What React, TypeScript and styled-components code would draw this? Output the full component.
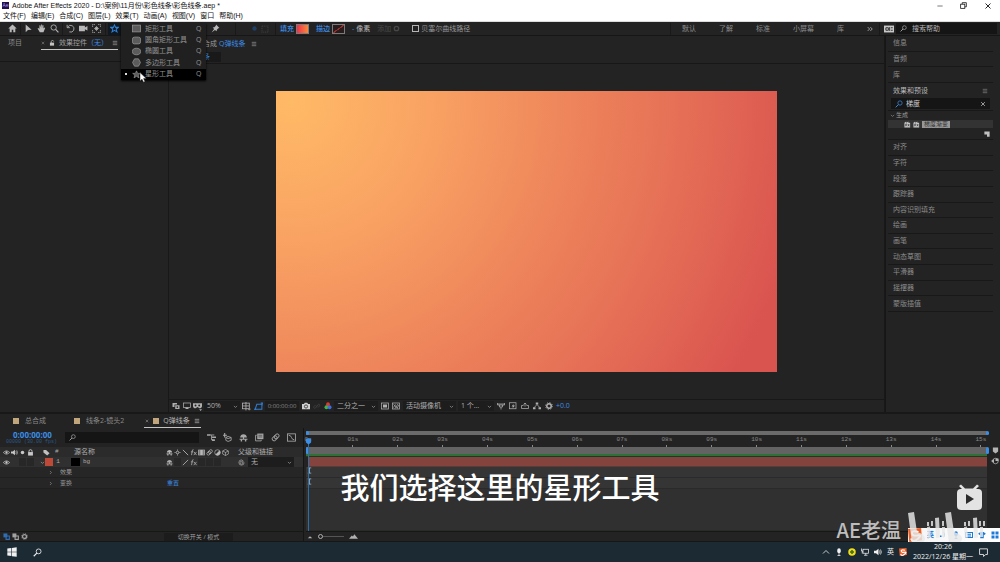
import React from "react";
import styled, { createGlobalStyle, css } from "styled-components";

const GlobalStyle = createGlobalStyle`
  * { box-sizing: border-box; }
  html, body { margin: 0; background: #1a1a1a; }
  body, button, input, select {
    font-family: "Open Sans", "Noto Sans CJK SC", sans-serif;
    font-size: 7px;
    line-height: 10px;
  }
  button, input, select { margin: 0; padding: 0; border: 0; background: none; color: inherit; }
  a { color: inherit; text-decoration: none; }
`;

/* ---------- icons ---------- */

const S = { fill: "none", stroke: "currentColor", strokeWidth: 1.5 } as const;
const F = { fill: "currentColor" } as const;
const starPath = "M8 1.5 10 6h4.8l-3.8 3 1.4 5L8 11.2 3.6 14 5 9 1.2 6H6z";

const glyphs: Record<string, React.ReactNode> = {
  home: <path {...F} d="M8 1 0.5 8H3v6.5h3.6V10h2.8v4.5H13V8h2.5z" />,
  cursor: <path {...F} d="M3 1v13.5l4-3.8 6.5-.6z" />,
  hand: <path {...F} d="M4.2 9 2.6 7 1 8l4 6.5h6.5L14.5 7l-1.3-1-1.7 2.2V2.4h-1.7V7L9 1H7.4v6L6 2H4.4z" />,
  zoom: <g {...S}><circle cx="6.5" cy="6.2" r="4.7" /><path d="m10 9.6 5 5.2" strokeWidth="2" /></g>,
  rotate: <g {...S}><path d="M3 5.5A6 6 0 1 1 6 14" /><path d="M2 1.5v5h5" /></g>,
  camera: <path {...F} d="M0 3h10.5v3.4L15 3.6v8l-4.5-2.4V13H0z" />,
  anchor: <g {...S}><path d="M1 5V1h4M11 1h4v4M15 11v4h-4M5 15H1v-4" strokeDasharray="2 1" /><path d="M8 4v8M4 8h8M5.5 5.5l5 5M10.5 5.5l-5 5" /></g>,
  starLine: <path {...S} strokeWidth="1.8" d={starPath} />,
  pin: <path {...F} d="m9 1 6 6-2 .5-2.6 2.6L10 13 7 10.5 1 15l4.5-6L3 6l3-.4L8.5 3z" />,
  dotCircle: <circle {...F} cx="8" cy="8" r="5" />,
  dotted: <rect {...S} x="2" y="2" width="12" height="12" strokeDasharray="2 1.5" strokeWidth="2.5" />,
  ring: <circle {...S} cx="8" cy="8" r="5" strokeWidth="3" />,
  rect: <rect x="0.8" y="2" width="14.4" height="12" fill="#5c5c5c" stroke="currentColor" strokeWidth="1.4" />,
  rounded: <rect x="0.8" y="2" width="14.4" height="12" rx="3.5" fill="#5c5c5c" stroke="currentColor" strokeWidth="1.4" />,
  ellipse: <ellipse cx="8" cy="8" rx="7.3" ry="5.8" fill="#5c5c5c" stroke="currentColor" strokeWidth="1.4" />,
  polygon: <path fill="#5c5c5c" stroke="currentColor" strokeWidth="1.4" d="M4.5 1.5h7L15 8l-3.5 6.5h-7L1 8z" />,
  starFill: <path fill="#5c5c5c" stroke="currentColor" strokeWidth="1.2" d={starPath} />,
  menu: <path {...S} d="M2 3.5h12M2 8h12M2 12.5h12" strokeWidth="1.8" />,
  lock: <g><path {...S} strokeWidth="2" d="M4.5 8V5a3.5 3.5 0 0 1 7 0v3" /><rect {...F} x="2.5" y="7" width="11" height="8" /></g>,
  unlock: <g><path {...S} strokeWidth="2" d="M6 8V4a3.3 3.3 0 0 1 6.5 0" /><rect {...F} x="2.5" y="7" width="11" height="8" /></g>,
  close: <path {...S} d="m3 3 10 10M13 3 3 13" strokeWidth="1.8" />,
  minimize: <path {...S} d="M1 8h14" />,
  restore: <g {...S} strokeWidth="1.8"><rect x="1.5" y="5" width="9.5" height="9.5" /><path d="M5 5V1.5h9.5V11H11" /></g>,
  more: <path {...S} strokeWidth="2" d="m2 3 5 5-5 5M9 3l5 5-5 5" />,
  panelSwitch: <g><rect {...F} x="0" y="2.5" width="16" height="11" /><path d="M3 6h4v4H3zM9 5v6M11 6h3M11 10h3" stroke="#222" strokeWidth="1.4" fill="none" /></g>,
  search: <g {...S}><circle cx="10" cy="6" r="4.3" /><path d="m6.8 9.2-5.5 5.5" strokeWidth="2" /></g>,
  chevronDown: <path {...S} strokeWidth="2" d="m3 6 5 5 5-5" />,
  chevronRight: <path {...S} strokeWidth="2" d="m6 3 5 5-5 5" />,
  fxPreset: <g><path {...F} d="M1 4 5 1v3l5-3v3h4v11H1z" /><path d="M4 12V7h3M4 9.5h3M9 7l3 5M12 7l-3 5" stroke="#222" strokeWidth="1.3" fill="none" /></g>,
  newItem: <path {...F} d="M1 1h14v14H8V9H1z" />,
  layers: <g><path {...F} d="M1 2h9v3H5v5H1z" /><path {...F} d="M6.5 6.5H15V14H6.5z" /><circle cx="10.7" cy="10.2" r="1.8" fill="#222" /></g>,
  monitor: <g><rect {...S} x="1" y="2" width="14" height="9" /><path {...F} d="M5 14h6v-3H5z" /></g>,
  mask: <g><path {...F} d="M0 2h16v5c0 3-2 4-4.5 4L8 9l-3.5 2C2 11 0 10 0 7z" /><circle cx="4.5" cy="6.3" r="1.7" fill="#222" /><circle cx="11" cy="6.3" r="1.7" fill="#222" /><path {...F} d="M11 13h5l-2.5 3z" /></g>,
  grid: <g {...S}><rect x="1" y="2" width="12" height="10" /><path d="M7 0v15M1 7h12M11 12l2 2.5 2-2.5" /></g>,
  path: <g {...S} strokeWidth="1.8"><path d="M2 13 5 4h9v9z" /><path d="M0 13h4M12 2h4v4" /></g>,
  photo: <g><path {...F} d="M0 4h4l1.5-2.5h5L12 4h4v10.5H0z" /><circle cx="8" cy="9" r="3.2" fill="none" stroke="#222" strokeWidth="1.5" /></g>,
  chain: <path {...S} strokeWidth="2" d="m6 10 4-5c2-2 5 1 3 3l-3 3M10 6 5 12c-2 2-5-1-3-3l3-3" />,
  rgb: <g><circle cx="8" cy="4.5" r="3.8" fill="#e2382c" /><circle cx="4.8" cy="10.5" r="3.8" fill="#41b34d" /><circle cx="11.2" cy="10.5" r="3.8" fill="#3c6fe0" /></g>,
  roi: <g><rect {...S} x="0.8" y="2" width="14.4" height="12" /><rect {...F} x="4" y="5" width="8" height="6" /></g>,
  transparent: <g><rect {...S} x="0.8" y="2" width="14.4" height="12" /><path {...S} d="m3 11 4-6M6 13l6-9M10 12l4-6M3 5l9 8" /></g>,
  align: <g {...S}><path d="M1 2v4h14V2M1 4h14M5 6v4h6V6M8 10v5" /></g>,
  fastPreview: <g><rect {...S} x="1" y="1.5" width="13" height="12" /><path {...F} d="M9 4 5 9h3l-1 4 5-6H9z" /></g>,
  timelineBtn: <g {...S}><path d="M1 7v6h14V7h-4M5 7H1M8 2v7M5 5l3-3 3 3" /></g>,
  flow: <g {...F}><path d="M5.5 1h5v4h-5zM0 10.5h5v4H0zM11 10.5h5v4h-5z" /><path {...S} d="M2.5 11 8 5l5.5 6" /></g>,
  gear: <g><circle {...S} cx="8" cy="8" r="4.5" strokeWidth="3" /><circle {...S} cx="8" cy="8" r="7" strokeDasharray="2.5 3" /></g>,
  eye: <g><path {...S} d="M0.8 8q7.2-7.5 14.4 0-7.2 7.5-14.4 0z" /><circle {...F} cx="8" cy="8" r="2.6" /></g>,
  audio: <g><path {...F} d="M0 5.5h4L9 1.5v13L4 10.5H0z" /><path {...S} d="M11 5q2 3 0 6M13 3q3.500 5 0 10" /></g>,
  dot: <circle {...F} cx="8" cy="8" r="4" />,
  tag: <path {...F} d="M1 2h6l8 7.5L9.500 15 1 8z" />,
  shy: <g><path {...F} d="M2 8C2 0 14 0 14 8H9v2h6v2H1v-2h6V8z" /><path {...F} d="M3 11h2.500v4H3zM10.500 11H13v4h-2.500z" /></g>,
  sun: <g {...S}><circle cx="8" cy="8" r="3" strokeWidth="2" /><path d="M8 1v3M8 12v3M1 8h3M12 8h3" /></g>,
  backslash: <path {...S} strokeWidth="2" d="m2 2 12 12" />,
  slash: <path {...S} strokeWidth="2" d="M2 14 14 2" />,
  fx: <path {...S} strokeWidth="1.8" d="M8 1.5Q5 1 5 5L3.500 14M2 6.500h5.500M9 6.500l6 7.500M15 6.500 8.500 14" />,
  film: <g><rect {...F} x="0.5" y="1.5" width="15" height="13" /><path stroke="#2a2a2a" strokeWidth="1.3" d="M4 2v12M12 2v12" /></g>,
  blur: <g {...S} strokeWidth="1.6"><ellipse cx="10" cy="6" rx="5" ry="3.6" transform="rotate(-45 10 6)" /><ellipse cx="6.5" cy="9.5" rx="5" ry="3.6" transform="rotate(-45 6.5 9.5)" /></g>,
  adjust: <g><circle {...S} cx="8" cy="8" r="6.3" /><path {...F} d="M12.500 3.500A6.300 6.300 0 0 1 3.500 12.500z" /></g>,
  cube: <path {...S} d="M8 1 14.500 4.500v7L8 15l-6.500-3.500v-7zM1.500 4.500 8 8l6.500-3.500M8 8v7" />,
  spiral: <path {...S} d="M14 8A6 6 0 1 1 8 2q5 1 3.500 6a3.500 3.500 0 1 1-4-3q3 0 2 4" />,
  comp: <g><path {...F} d="M0 2h6v3H0zM9 6h7v3H9zM9 11h5v3H9z" /><path {...S} d="M5 3.500h8M8 4v8h3" /></g>,
  draft: <g><path {...S} d="M9 6l5.500 2v5L9 15l-4-2V8zM5 8l4 2 5.500-2" /><path {...F} d="M4 0v3h3v2H4v3H2V5H0V3h2V0z" /></g>,
  frames: <g><path {...F} d="M4 1h11v10H4z" /><path {...S} d="M3 4H1v10h10v-2" /><path stroke="#222" d="M6 4h7M6 7h7" /></g>,
  graph: <g {...S}><rect x="1" y="1.5" width="14" height="13" /><path d="M3 4q4 0 5 4t5 4" /></g>,
  mountain: <path {...F} d="m0 12 5-6 2 2 2.500-4L16 12z" />,
  hill: <path {...F} d="m2 11 6-5 6 5z" />,
  marker: <path {...F} d="M2 1h12v9l-6 5-6-5z" />,
  bin: <g><circle {...S} cx="9" cy="8" r="5.5" /><path {...F} d="M0 8l6-4v8zM9 3h6v5H9z" /></g>,
  ibeam: <path {...S} strokeWidth="1.8" d="M4 2h8M4 14h8M8 2v12" />,
  toggle: <g><path {...F} d="M1 1h9v9H1z" /><path {...S} strokeWidth="2.5" d="M7 7h7.500v7.500H7z" /></g>,
  windows: <path {...F} d="M0.500 2.500 7 1.600v6H0.500zM8 1.500 15.500 0.500v7.100H8zM0.500 8.500H7v6L0.500 13.500zM8 8.500h7.500v7.100L8 14.600z" />,
  caretUp: <path {...S} strokeWidth="1.6" d="m2 11 6-6 6 6" />,
  mic: <g><rect {...F} x="4.5" y="0.5" width="7" height="10" rx="3.5" /><path {...S} d="M8 10v5.500M5 15h6" /></g>,
  guard: <g><circle cx="8" cy="8" r="7.5" fill="#f0dc1e" /><path d="M8 4v8M4 8h8" stroke="#3c6e14" strokeWidth="3" /></g>,
  network: <g {...S}><rect x="4" y="2.5" width="11" height="8" /><path d="M9.500 10.500v4M6 14.500h7M1 1v5h3M2.500 6v5" /></g>,
  note: <path {...S} d="M1 1.500h14v10h-3l-4 3.500v-3.500H1z" />,
  sogou: <g><path fill="#ec5f26" d="M0 1 15 0l1 14-14.500 2z" /><path d="M12 4.500Q4 2.500 4.500 6t6.500 2.500 0 4-7.500-.5" fill="none" stroke="#fff" strokeWidth="2.2" /></g>,
  moon: <path {...F} d="M9 2c4 3 4 8 0 11 2-4 2-7 0-11zM2 9h3v3H2z" />,
  keyboard: <g {...S} strokeWidth="2"><rect x="1" y="3" width="14" height="10" /><path d="M4 6.500h8M4 10h8" /></g>,
  shirt: <path {...F} d="M5 2h6l4.500 3-2 3-2-1v7.500h-7V7l-2 1-2-3z" />,
  apps: <path {...F} d="M1 1h6v6H1zM9 1h6v6H9zM1 9h6v6H1zM9 9h6v6H9z" />,
};

const Svg = styled.svg<{ $s: number; $c?: string }>`
  display: block;
  flex: none;
  width: ${(p) => p.$s}px;
  height: ${(p) => p.$s}px;
  color: ${(p) => p.$c ?? "inherit"};
`;

const Icon = ({ n, s = 9, c }: { n: string; s?: number; c?: string }) => (
  <Svg $s={s} $c={c} viewBox="0 0 16 16" aria-hidden="true">{glyphs[n]}</Svg>
);

/* ---------- window frame ---------- */

const Window = styled.div`
  position: relative;
  display: flex;
  flex-direction: column;
  min-height: 100vh;
  overflow: hidden;
  background: #181818;
  color: #a2a2a2;
`;

const TitleBar = styled.header`
  display: flex;
  align-items: center;
  height: 11px;
  padding: 0 8px 0 2px;
  gap: 3px;
  background: #fff;
  color: #111;
`;
const AppBadge = styled.span`
  width: 7px;
  height: 7px;
  background: #22104f;
  color: #b9a4f5;
  font-size: 5px;
  line-height: 7px;
  text-align: center;
`;
const Title = styled.h1`
  flex: 1;
  margin: 0;
  font-family: "Liberation Sans", "Noto Sans CJK SC", sans-serif;
  font-size: 7px;
  font-weight: 400;
  line-height: 11px;
  white-space: nowrap;
`;
const WindowButtons = styled.div`
  display: flex;
  gap: 17px;
`;

const MenuBar = styled.nav`
  display: flex;
  align-items: center;
  height: 11px;
  padding-left: 3px;
  gap: 5px;
  background: #fff;
  color: #111;
  border-bottom: 1px solid #dcdcdc;
  white-space: nowrap;
`;
const MenuButton = styled.button`
  font-family: "Liberation Sans", "Noto Sans CJK SC", sans-serif;
`;

const IconButton = styled.button<{ $w?: number; $on?: boolean }>`
  display: flex;
  flex: none;
  align-items: center;
  justify-content: center;
  width: ${(p) => (p.$w ? `${p.$w}px` : "auto")};
  height: ${(p) => (p.$on ? "12px" : "auto")};
  background: ${(p) => (p.$on ? "#101820" : "none")};
`;

/* ---------- tool bar ---------- */

const ToolBar = styled.div`
  display: flex;
  align-items: center;
  height: 14px;
  padding: 0 3px 0 6px;
  background: #232323;
  border-bottom: 1px solid #161616;
  color: #b9b9b9;
  white-space: nowrap;
`;
const Divider = styled.span<{ $m?: number }>`
  flex: none;
  width: 1px;
  height: 12px;
  margin: 0 ${(p) => p.$m ?? 1}px;
  background: #191919;
`;
const HiddenTools = styled.span`
  flex: none;
  width: 88px;
`;
const BlueButton = styled.button`
  color: #3d8ce4;
  font-weight: 500;
`;
const Swatch = styled.button<{ $fill: string }>`
  width: 13px;
  height: 10px;
  background: ${(p) => p.$fill};
  border: 1px solid #7b7b7b;
`;
const ToolOptions = styled.div`
  display: flex;
  flex: 1;
  align-items: center;
  gap: 2px;
`;
const PairGap = styled.span`
  width: 3px;
`;
const Dim = styled.button`
  display: flex;
  align-items: center;
  gap: 2px;
  color: #484848;
`;
const CheckLabel = styled.label`
  display: flex;
  align-items: center;
  gap: 2px;
  padding-left: 10px;
  color: #999;
`;
const CheckBox = styled.input`
  appearance: none;
  width: 7px;
  height: 7px;
  border: 1px solid #b5b5b5;
`;
const Workspaces = styled.nav`
  display: flex;
  align-items: center;
  gap: 23px;
  padding-right: 5px;
  color: #8c8c8c;
`;

const SearchBox = styled.label<{ $w?: number }>`
  display: flex;
  align-items: center;
  width: ${(p) => (p.$w ? `${p.$w}px` : "auto")};
  height: 11px;
  padding: 0 4px;
  gap: 5px;
  background: #151515;
  color: #b0b0b0;
`;
const SearchInput = styled.input`
  flex: 1;
  min-width: 0;
  height: 10px;
  color: #d0d0d0;
  outline: none;
  &::placeholder { color: #b4b4b4; opacity: 1; }
`;

/* ---------- shape tool menu ---------- */

const ToolMenu = styled.div`
  position: absolute;
  z-index: 3;
  top: 23px;
  left: 121px;
  display: grid;
  grid-auto-rows: 1fr;
  width: 85px;
  height: 57px;
  background: #202020;
  box-shadow: 0 1px 2px #000;
`;
const ToolMenuItem = styled.button<{ $on?: boolean }>`
  display: grid;
  grid-template-columns: 11px 13px 1fr 6px;
  align-items: center;
  padding-right: 4px;
  background: ${(p) => (p.$on ? "#000" : "none")};
  color: #939393;
  text-align: left;
  white-space: nowrap;
`;
const Bullet = styled.span<{ $on?: boolean }>`
  width: 2px;
  height: 2px;
  margin-left: 4px;
  background: ${(p) => (p.$on ? "#ddd" : "none")};
`;
const Pointer = styled.svg`
  position: absolute;
  z-index: 4;
  top: 72px;
  left: 139px;
  width: 8px;
  height: 11px;
`;

/* ---------- upper panels ---------- */

const Upper = styled.main`
  display: grid;
  grid-template-columns: 168px 1fr 115px;
  flex: 1;
  gap: 1px;
  min-height: 376px;
`;
const Panel = styled.section`
  display: flex;
  flex-direction: column;
  min-width: 0;
  background: #232323;
`;
const TabRow = styled.div<{ $h: number }>`
  display: flex;
  align-items: flex-start;
  height: ${(p) => p.$h}px;
  padding-left: 8px;
  gap: 19px;
  border-bottom: 1px solid #171717;
  white-space: nowrap;
`;
const Tab = styled.button<{ $on?: boolean }>`
  display: flex;
  align-items: center;
  height: 14px;
  gap: 4px;
  color: ${(p) => (p.$on ? "#a0a0a0" : "#8a8a8a")};
  border-bottom: 1px solid ${(p) => (p.$on ? "#c4c4c4" : "transparent")};
`;
const Blue = styled.span`
  color: #3d8ce4;
`;
const CompHeader = styled.div`
  height: 28px;
  border-bottom: 1px solid #171717;
  white-space: nowrap;
`;
const CompTab = styled.button`
  display: flex;
  align-items: center;
  height: 15px;
  padding-left: 34px;
  gap: 2px;
  color: #9a9a9a;
`;
const Crumb = styled.a`
  display: block;
  width: 52px;
  height: 10px;
  margin-top: 1px;
  padding-right: 11px;
  background: #191919;
  color: #3d8ce4;
  line-height: 9px;
  text-align: right;
`;
const Viewer = styled.div`
  display: flex;
  flex: 1;
  align-items: center;
  justify-content: center;
`;
const Canvas = styled.div`
  width: 70%;
  aspect-ratio: 16 / 9;
  background: radial-gradient(circle farthest-corner at 3% 4%, #ffba66 0%, #f9a263 25%, #ee855b 50%, #e36a55 75%, #d9534f 94%);
`;
const ViewerBar = styled.div`
  display: flex;
  align-items: center;
  height: 13px;
  padding-left: 2px;
  gap: 2px;
  background: #232323;
  border-top: 1px solid #181818;
  color: #b0b0b0;
  white-space: nowrap;
`;
const SelectWrap = styled.label<{ $w: number }>`
  display: grid;
  align-items: center;
  width: ${(p) => p.$w}px;
  height: 10px;
  background: #1d1d1d;
  color: #b0b0b0;
  > * { grid-area: 1 / 1; }
  > svg { justify-self: end; margin-right: 2px; pointer-events: none; }
`;
const Select = styled.select`
  appearance: none;
  width: 100%;
  height: 10px;
  padding-left: 3px;
  outline: none;
`;
const Timecode = styled.button`
  width: 34px;
  height: 10px;
  background: #1d1d1d;
  color: #8a8a8a;
  font-size: 6px;
`;

const Pick = ({ w, label, value }: { w: number; label: string; value: string }) => (
  <SelectWrap $w={w}>
    <Select aria-label={label} defaultValue={value}><option>{value}</option></Select>
    <Icon n="chevronDown" s={5} />
  </SelectWrap>
);

/* ---------- right side panels ---------- */

const SidePanel = styled(Panel)`
  padding: 0 7px 0 2px;
  border-left: 1px solid #161616;
`;
const Stack = styled.div<{ $h: number }>`
  display: grid;
  grid-auto-rows: 1fr;
  height: ${(p) => p.$h}px;
`;
const StackRow = styled.button<{ $on?: boolean }>`
  display: flex;
  align-items: center;
  justify-content: space-between;
  padding: 0 5px;
  border-bottom: 1px solid #181818;
  color: ${(p) => (p.$on ? "#b8b8b8" : "#8c8c8c")};
  white-space: nowrap;
  ${(p) => p.$on && css`height: 15px; border: 0;`}
`;
const EffectSearch = styled(SearchBox)`
  margin: 0 3px;
  gap: 3px;
`;
const EffectGroup = styled.div`
  display: flex;
  align-items: center;
  height: 10px;
  padding-left: 2px;
  gap: 1px;
  margin-top: 1px;
  border-top: 1px solid #181818;
  color: #9a9a9a;
`;
const EffectRow = styled.div`
  display: flex;
  align-items: center;
  height: 8px;
  padding-left: 16px;
  gap: 2px;
  background: #333;
  color: #c4c4c4;
`;
const EffectName = styled.button`
  height: 7px;
  width: 28px;
  background: #989898;
  color: #333;
  line-height: 7px;
  font-size: 6px;
`;
const EffectFoot = styled.div`
  display: flex;
  align-items: center;
  justify-content: flex-end;
  height: 12px;
  padding-right: 3px;
  border-bottom: 1px solid #181818;
  color: #c0c0c0;
`;

/* ---------- timeline ---------- */

const Timeline = styled.section`
  display: flex;
  flex-direction: column;
  height: 128px;
  margin-top: 2px;
  background: #232323;
  border-bottom: 1px solid #161616;
`;
const CompTabs = styled.div`
  display: flex;
  align-items: flex-end;
  height: 14px;
  padding-left: 13px;
  gap: 21px;
  white-space: nowrap;
`;
const Chip = styled.i`
  width: 6px;
  height: 6px;
  background: #c1a67c;
`;
const TimelineTab = styled(Tab)`
  gap: 6px;
  height: 13px;
  padding-right: 7px;
  ${(p) => p.$on && css`gap: 4px; margin-left: -8px; padding: 0 1px; color: #b8b8b8;`}
`;
const Tracks = styled.div`
  display: grid;
  grid-template-columns: 304px 1fr;
  flex: 1;
`;
const LayerSide = styled.div`
  display: flex;
  flex-direction: column;
  border-right: 1px solid #151515;
`;
const ControlRow = styled.div`
  display: grid;
  grid-template-columns: 65px 134px 1fr;
  align-items: center;
  height: 19px;
`;
const CurrentTime = styled.div`
  padding-left: 13px;
  color: #3a8ee6;
  font-size: 8px;
  font-weight: 700;
  line-height: 9px;
`;
const FrameInfo = styled.div`
  padding-left: 6px;
  color: #2a588c;
  font-family: "Liberation Mono", monospace;
  font-size: 5px;
  line-height: 7px;
  white-space: nowrap;
`;
const ModeButtons = styled.div`
  display: flex;
  justify-content: space-between;
  padding: 0 7px 0 8px;
  color: #a8a8a8;
`;
const LayerTable = styled.table`
  width: 100%;
  table-layout: fixed;
  border-collapse: collapse;
  white-space: nowrap;
  th, td { padding: 0; font-weight: 400; text-align: left; height: 10px; }
`;
const LayerRow = styled.tr<{ $bg: string }>`
  background: ${(p) => p.$bg};
  color: #acacac;
`;
const Cells = styled.div<{ $gap?: number; $pad?: number }>`
  display: flex;
  align-items: center;
  height: 10px;
  gap: ${(p) => p.$gap ?? 1}px;
  padding-left: ${(p) => p.$pad ?? 0}px;
`;
const Slot = styled.span<{ $bg?: string; $w?: number }>`
  display: flex;
  justify-content: center;
  width: ${(p) => p.$w ?? 7}px;
  height: 8px;
  align-items: center;
  background: ${(p) => p.$bg ?? "none"};
`;
const Mono = styled.span`
  font-family: "Liberation Mono", "Noto Sans CJK SC", monospace;
  font-size: 6px;
`;
const Property = styled.div`
  display: grid;
  grid-template-columns: 12px 107px 1fr;
  align-items: center;
  height: 11px;
  padding-left: 48px;
  border-bottom: 1px solid #1f1f1f;
  background: #262626;
  color: #999;
  font-size: 6px;
`;
const ResetButton = styled.button`
  justify-self: start;
  color: #3d8ce4;
  font-size: 6px;
`;
const LayerFoot = styled.div`
  display: flex;
  align-items: center;
  height: 10px;
  margin-top: auto;
  padding-left: 3px;
  gap: 2px;
  border-top: 1px solid #171717;
`;
const SwitchMode = styled.button`
  width: 69px;
  height: 8px;
  margin-left: 134px;
  background: #1c1c1c;
  font-size: 6px;
  line-height: 8px;
`;

const TrackSide = styled.div`
  position: relative;
  display: grid;
  grid-template-columns: 1fr 13px;
  margin-top: 3px;
`;
const TrackArea = styled.div`
  display: flex;
  flex-direction: column;
  padding-left: 2px;
`;
const RangeBar = styled.div<{ $h: number; $bg: string }>`
  display: flex;
  justify-content: space-between;
  height: ${(p) => p.$h}px;
  background: ${(p) => p.$bg};
`;
const Handle = styled.i`
  width: 3px;
  margin-right: -2px;
  border-radius: 2px;
  background: #3a8ee6;
`;
const Ruler = styled.div`
  display: flex;
  justify-content: space-between;
  height: 12px;
  padding: 0 6px 0 2px;
  color: #8b8b8b;
`;
const Tick = styled.div`
  display: flex;
  flex-direction: column;
  align-items: center;
  justify-content: space-between;
  width: 0;
  font-family: "Liberation Mono", monospace;
  font-size: 6px;
  line-height: 8px;
  padding-top: 1px;
  &::after { content: ""; width: 1px; height: 2px; background: #8b8b8b; }
`;
const Cached = styled.div`
  height: 3px;
  background: #2f6f38;
  border-bottom: 1px solid #1c3a1f;
`;
const LayerBar = styled.div`
  height: 10px;
  margin-left: 3px;
  background: #84443d;
  border-bottom: 1px solid #5c3a36;
`;
const Lane = styled.div<{ $grow?: boolean }>`
  height: 11px;
  flex: ${(p) => (p.$grow ? "1" : "none")};
  background: ${(p) => (p.$grow ? "#303030" : "#353535")};
  border-bottom: 1px solid #2a2a2a;
  color: #9fb4c6;
`;
const ZoomRow = styled.div`
  display: flex;
  align-items: center;
  height: 10px;
  padding-left: 1px;
  gap: 5px;
  border-top: 1px solid #171717;
  color: #b0b0b0;
`;
const ZoomSlider = styled.input`
  appearance: none;
  width: 26px;
  height: 6px;
  background: linear-gradient(#555, #555) center / 100% 1px no-repeat;
  &::-webkit-slider-thumb {
    appearance: none;
    width: 5px;
    height: 5px;
    border: 1px solid #b0b0b0;
    border-radius: 50%;
    background: #232323;
  }
`;
const Playhead = styled.div`
  position: absolute;
  top: 7px;
  bottom: 10px;
  left: 4px;
  width: 1px;
  background: #2d6ea8;
  > svg { margin-left: -3px; }
`;
const Gutter = styled.div`
  display: flex;
  flex-direction: column;
  align-items: center;
  padding: 16px 0 0 3px;
  gap: 3px;
  color: #b4b4b4;
`;

/* ---------- desktop task bar and overlays ---------- */

const TaskBar = styled.footer`
  display: flex;
  align-items: center;
  justify-content: space-between;
  height: 20px;
  padding: 0 12px 0 7px;
  background: #1c2a33;
  color: #f0f0f0;
`;
const TaskGroup = styled.div<{ $gap: number }>`
  display: flex;
  align-items: center;
  gap: ${(p) => p.$gap}px;
`;
const Clock = styled.time`
  width: 62px;
  font-size: 7px;
  line-height: 10px;
  text-align: center;
  white-space: nowrap;
`;
const Subtitle = styled.p`
  position: absolute;
  right: 0;
  bottom: 55px;
  left: 0;
  margin: 0;
  color: #fff;
  font-family: "Noto Sans CJK SC", sans-serif;
  font-size: 29px;
  font-weight: 500;
  line-height: 42px;
  text-align: center;
`;
const InputBar = styled.div`
  position: absolute;
  right: 0;
  bottom: 20px;
  display: flex;
  align-items: center;
  width: 92px;
  height: 14px;
  gap: 5px;
  background: linear-gradient(90deg, #f4f4f4, #fff);
  color: #1b7ad8;
  font-weight: 700;
`;
const Author = styled.div`
  position: absolute;
  right: 99px;
  bottom: 18px;
  color: #bdbdbd;
  font-family: "Noto Sans CJK SC", sans-serif;
  font-size: 20px;
  font-weight: 500;
  line-height: 28px;
`;
const SiteLogo = styled.svg`
  position: absolute;
  right: 12px;
  bottom: 20px;
  width: 84px;
  height: 58px;
`;

const menus = ["文件(F)", "编辑(E)", "合成(C)", "图层(L)", "效果(T)", "动画(A)", "视图(V)", "窗口", "帮助(H)"];
const shapes: [string, string][] = [
  ["rect", "矩形工具"], ["rounded", "圆角矩形工具"], ["ellipse", "椭圆工具"], ["polygon", "多边形工具"], ["starFill", "星形工具"],
];
const lowerPanels = ["对齐", "字符", "段落", "跟踪器", "内容识别填充", "绘画", "画笔", "动态草图", "平滑器", "摇摆器", "蒙版插值"];
const switches = ["shy", "sun", "backslash", "fx", "film", "blur", "adjust", "cube"];
const seconds = ["0s", ...Array.from({ length: 15 }, (_, i) => `${String(i + 1).padStart(2, "0")}s`)];

export default function App() {
  return (
    <Window lang="zh-CN">
      <GlobalStyle />
      <TitleBar>
        <AppBadge>Ae</AppBadge>
        <Title>Adobe After Effects 2020 - D:\案例\11月份\彩色线条\彩色线条.aep *</Title>
        <WindowButtons>
          <IconButton aria-label="最小化"><Icon n="minimize" s={6} /></IconButton>
          <IconButton aria-label="还原"><Icon n="restore" s={7} /></IconButton>
          <IconButton aria-label="关闭"><Icon n="close" s={8} /></IconButton>
        </WindowButtons>
      </TitleBar>
      <MenuBar>{menus.map((m) => <MenuButton key={m}>{m}</MenuButton>)}</MenuBar>

      <ToolBar>
        <IconButton $w={13} aria-label="主页"><Icon n="home" /></IconButton>
        <Divider />
        {["cursor", "hand", "zoom"].map((n) => <IconButton key={n} $w={13} aria-label={n}><Icon n={n} /></IconButton>)}
        <Divider />
        {["rotate", "camera", "anchor"].map((n) => <IconButton key={n} $w={13} aria-label={n}><Icon n={n} /></IconButton>)}
        <Divider $m={2} />
        <IconButton $w={13} $on aria-label="星形工具"><Icon n="starLine" c="#2f7fd6" /></IconButton>
        <HiddenTools />
        <IconButton $w={13} aria-label="人偶工具"><Icon n="pin" /></IconButton>
        <Divider $m={13} />
        <IconButton $w={10} aria-label="工具创建形状"><Icon n="dotCircle" s={7} c="#1f3f66" /></IconButton>
        <IconButton $w={12} aria-label="工具创建蒙版"><Icon n="dotted" s={8} c="#3a3a3a" /></IconButton>
        <Divider $m={4} />
        <ToolOptions>
          <BlueButton>填充</BlueButton>
          <Swatch $fill="linear-gradient(90deg, #f0304a, #f98a3c)" aria-label="填充颜色" />
          <PairGap />
          <BlueButton>描边</BlueButton>
          <Swatch $fill="linear-gradient(to bottom right, #2a1c1c 45%, #9c2f2f 46%, #9c2f2f 54%, #2a1c1c 55%)" aria-label="描边颜色" />
          <PairGap />
          <Blue>-</Blue>
          <span>像素</span>
          <PairGap />
          <Dim>添加 <Icon n="ring" s={7} /></Dim>
          <CheckLabel><CheckBox type="checkbox" />贝塞尔曲线路径</CheckLabel>
        </ToolOptions>
        <Divider $m={11} />
        <Workspaces>
          {["默认", "了解", "标准", "小屏幕", "库"].map((w) => <button key={w}>{w}</button>)}
          <IconButton aria-label="更多工作区"><Icon n="more" s={6} c="#c8c8c8" /></IconButton>
        </Workspaces>
        <Divider />
        <IconButton $w={15} aria-label="面板"><Icon n="panelSwitch" s={10} c="#c8c8c8" /></IconButton>
        <SearchBox $w={101}><Icon n="search" s={7} /><SearchInput aria-label="搜索帮助" placeholder="搜索帮助" /></SearchBox>
      </ToolBar>

      <ToolMenu role="menu">
        {shapes.map(([icon, name], i) => (
          <ToolMenuItem key={name} role="menuitem" $on={i === 4}>
            <Bullet $on={i === 4} />
            <Icon n={icon} />
            <span>{name}</span>
            <span>Q</span>
          </ToolMenuItem>
        ))}
      </ToolMenu>
      <Pointer viewBox="0 0 8 11" aria-hidden="true">
        <path d="M1 .5v8.500l2-1.800 1.500 3 1.500-.7-1.400-2.900H7.300z" fill="#fff" stroke="#222" strokeWidth=".5" />
      </Pointer>

      <Upper>
        <Panel>
          <TabRow $h={26}>
            <Tab>项目</Tab>
            <Tab $on><Icon n="close" s={4} /><Icon n="unlock" s={6} c="#c4c4c4" /><span>效果控件<Blue>（无）</Blue></span><Icon n="menu" s={6} /></Tab>
          </TabRow>
        </Panel>

        <Panel>
          <CompHeader>
            <CompTab>合成 <Blue>Q弹线条</Blue>&nbsp;<Icon n="menu" s={6} /></CompTab>
            <Crumb href="#comp">条</Crumb>
          </CompHeader>
          <Viewer><Canvas role="img" aria-label="合成预览" /></Viewer>
          <ViewerBar>
            <IconButton $w={9} aria-label="始终预览"><Icon n="layers" s={8} /></IconButton>
            <IconButton $w={9} aria-label="主查看器"><Icon n="monitor" s={8} /></IconButton>
            <IconButton $w={9} aria-label="眼镜"><Icon n="mask" s={9} /></IconButton>
            <Pick w={36} label="放大率" value="50%" />
            <IconButton $w={9} aria-label="网格"><Icon n="grid" /></IconButton>
            <IconButton $w={10} aria-label="蒙版路径"><Icon n="path" c="#2f7fd6" /></IconButton>
            <Timecode>0:00:00:00</Timecode>
            <IconButton $w={9} aria-label="快照"><Icon n="photo" s={8} c="#d0d0d0" /></IconButton>
            <IconButton $w={9} aria-label="显示快照"><Icon n="chain" s={8} c="#3c3c3c" /></IconButton>
            <IconButton $w={9} aria-label="通道"><Icon n="rgb" s={8} /></IconButton>
            <Pick w={44} label="分辨率" value="二分之一" />
            <IconButton $w={9} aria-label="目标区域"><Icon n="roi" s={8} /></IconButton>
            <IconButton $w={10} aria-label="透明网格"><Icon n="transparent" s={8} /></IconButton>
            <Pick w={53} label="视图" value="活动摄像机" />
            <Pick w={36} label="视图布局" value="1 个…" />
            {["align", "fastPreview", "timelineBtn", "flow", "gear"].map((n) => (
              <IconButton key={n} $w={10} aria-label={n}><Icon n={n} s={8} /></IconButton>
            ))}
            <BlueButton>+0.0</BlueButton>
          </ViewerBar>
        </Panel>

        <SidePanel as="aside">
          <Stack $h={47}>{["信息", "音频", "库"].map((p) => <StackRow key={p}>{p}</StackRow>)}</Stack>
          <StackRow $on>效果和预设<Icon n="menu" s={6} c="#858585" /></StackRow>
          <EffectSearch>
            <Icon n="search" s={8} c="#3d86d8" />
            <SearchInput aria-label="搜索效果" defaultValue="梯度" />
            <Icon n="close" s={6} c="#d8d8d8" />
          </EffectSearch>
          <EffectGroup><Icon n="chevronDown" s={5} /><Mono>生成</Mono></EffectGroup>
          <EffectRow><Icon n="fxPreset" s={7} /><Icon n="fxPreset" s={7} /><EffectName>梯度渐变</EffectName></EffectRow>
          <EffectFoot><Icon n="newItem" s={6} /></EffectFoot>
          <Stack $h={172}>{lowerPanels.map((p) => <StackRow key={p}>{p}</StackRow>)}</Stack>
        </SidePanel>
      </Upper>

      <Timeline>
        <CompTabs>
          <TimelineTab><Chip />总合成</TimelineTab>
          <TimelineTab><Chip />线条2-镜头2</TimelineTab>
          <TimelineTab $on><Icon n="close" s={4} /><Chip />Q弹线条<Icon n="menu" s={6} /></TimelineTab>
        </CompTabs>
        <Tracks>
          <LayerSide>
            <ControlRow>
              <div>
                <CurrentTime>0:00:00:00</CurrentTime>
                <FrameInfo>00000 (30.00 fps)</FrameInfo>
              </div>
              <SearchBox><Icon n="search" s={7} /><SearchInput aria-label="搜索图层" /></SearchBox>
              <ModeButtons>
                {["comp", "draft", "shy", "frames", "blur", "graph"].map((n) => (
                  <IconButton key={n} aria-label={n}><Icon n={n} /></IconButton>
                ))}
              </ModeButtons>
            </ControlRow>
            <LayerTable>
              <colgroup><col width="40" /><col width="31" /><col width="94" /><col width="73" /><col width="65" /></colgroup>
              <thead>
                <LayerRow $bg="#2b2b2b">
                  <th><Cells $gap={1} $pad={3}>{["eye", "audio", "dot", "lock"].map((n) => <Slot key={n}><Icon n={n} s={7} c="#c8c8c8" /></Slot>)}</Cells></th>
                  <th><Cells $gap={5} $pad={3}><Icon n="tag" s={7} c="#c0c0c0" /><Mono>#</Mono></Cells></th>
                  <th><Cells $pad={3}>源名称</Cells></th>
                  <th><Cells $pad={1}>{switches.map((n) => <Slot key={n}><Icon n={n} s={7} c="#b8b8b8" /></Slot>)}</Cells></th>
                  <th><Cells>父级和链接</Cells></th>
                </LayerRow>
              </thead>
              <tbody>
                <LayerRow $bg="#303030">
                  <td><Cells $gap={1} $pad={3}><Slot><Icon n="eye" s={7} c="#d0d0d0" /></Slot><Slot /><Slot $bg="#272727" /><Slot $bg="#272727" /></Cells></td>
                  <td><Cells $gap={0}><Slot $w={5}><Icon n="chevronDown" s={5} /></Slot><Slot $w={8} $bg="#bd4a38" /><Slot $w={10}><Mono>1</Mono></Slot></Cells></td>
                  <td><Cells $gap={3}><Slot $w={9} $bg="#000" /><Mono>bg</Mono></Cells></td>
                  <td>
                    <Cells $pad={1}>
                      <Slot><Icon n="shy" s={7} /></Slot><Slot $bg="#272727" /><Slot><Icon n="slash" s={7} /></Slot><Slot><Icon n="fx" s={7} /></Slot>
                      <Slot $bg="#272727" /><Slot $bg="#272727" /><Slot $bg="#272727" /><Slot />
                    </Cells>
                  </td>
                  <td><Cells $gap={3}><Icon n="spiral" s={7} /><Pick w={46} label="父级" value="无" /></Cells></td>
                </LayerRow>
              </tbody>
            </LayerTable>
            <Property><Icon n="chevronRight" s={5} />效果</Property>
            <Property><Icon n="chevronRight" s={5} />变换<ResetButton>重置</ResetButton></Property>
            <LayerFoot>
              <Icon n="toggle" s={7} c="#2f6db5" /><Icon n="toggle" s={7} /><Icon n="gear" s={7} />
              <SwitchMode>切换开关 / 模式</SwitchMode>
            </LayerFoot>
          </LayerSide>

          <TrackSide>
            <TrackArea>
              <RangeBar $h={4} $bg="#6b6b6b"><Handle /><Handle /></RangeBar>
              <Ruler>{seconds.map((s) => <Tick key={s}>{s}</Tick>)}</Ruler>
              <RangeBar $h={7} $bg="#636363"><Handle /><Handle /></RangeBar>
              <Cached />
              <LayerBar />
              <Lane><Icon n="ibeam" s={7} /></Lane>
              <Lane><Icon n="ibeam" s={7} /></Lane>
              <Lane $grow />
              <ZoomRow>
                <Icon n="hill" s={6} />
                <ZoomSlider type="range" aria-label="时间轴缩放" defaultValue={0} />
                <Icon n="mountain" s={9} />
              </ZoomRow>
            </TrackArea>
            <Gutter><Icon n="marker" s={7} /><Icon n="bin" s={8} /></Gutter>
            <Playhead><Icon n="marker" s={7} c="#3a8ee6" /></Playhead>
          </TrackSide>
        </Tracks>
      </Timeline>

      <TaskBar>
        <TaskGroup $gap={16}>
          <IconButton aria-label="开始"><Icon n="windows" s={10} /></IconButton>
          <IconButton aria-label="搜索"><Icon n="search" s={9} /></IconButton>
        </TaskGroup>
        <TaskGroup $gap={5}>
          {["caretUp", "mic", "guard", "network", "audio"].map((n) => <Icon key={n} n={n} s={8} />)}
          <span>英</span>
          <Icon n="sogou" s={8} />
          <Clock>20:26<br />2022/12/26 星期一</Clock>
          <Icon n="note" s={9} />
        </TaskGroup>
      </TaskBar>

      <InputBar>
        <Icon n="sogou" s={14} />
        <span>英</span>
        {["moon", "mic", "keyboard", "shirt", "apps"].map((n) => <Icon key={n} n={n} s={8} />)}
      </InputBar>
      <Author>AE老温</Author>
      <SiteLogo viewBox="0 0 84 58" aria-hidden="true">
        <g fill="#e3e3e3" transform="translate(0 -3)">
          <path d="m55 5 2-1.500 4 4h8l4-4L75 5l-3 3h2q4 0 4 4v13q0 4-4 4H57q-4 0-4-4V12q0-4 4-4h1z" />
          <path d="M62 13v10l8-5z" fill="#2c2c2c" />
        </g>
        <g fill="#e9e9e9" opacity=".82">
          <path d="m4 29 6-1 3 20q8 2 8 7 0 5-13 4z" />
          <path d="m41 29 6-1 3 20q8 2 8 7 0 5-13 4z" />
          <path d="m23 43 3-.5 1 11-3 .5zM31 34l4-.5 1 20-4 .5zM23 38h2v4h-2zM27 37h2v5h-2zM38 37h2v5h-2zM60 43l3-.5 1 11-3 .5zM69 34l4-.5 1 20-4 .5zM60 38h2v4h-2zM64 37h2v5h-2zM75 37h2v5h-2zM79 37h2v5h-2zM38 43h3v10h-3zM76 43h3v10h-3z" />
        </g>
      </SiteLogo>
      <Subtitle>我们选择这里的星形工具</Subtitle>
    </Window>
  );
}
